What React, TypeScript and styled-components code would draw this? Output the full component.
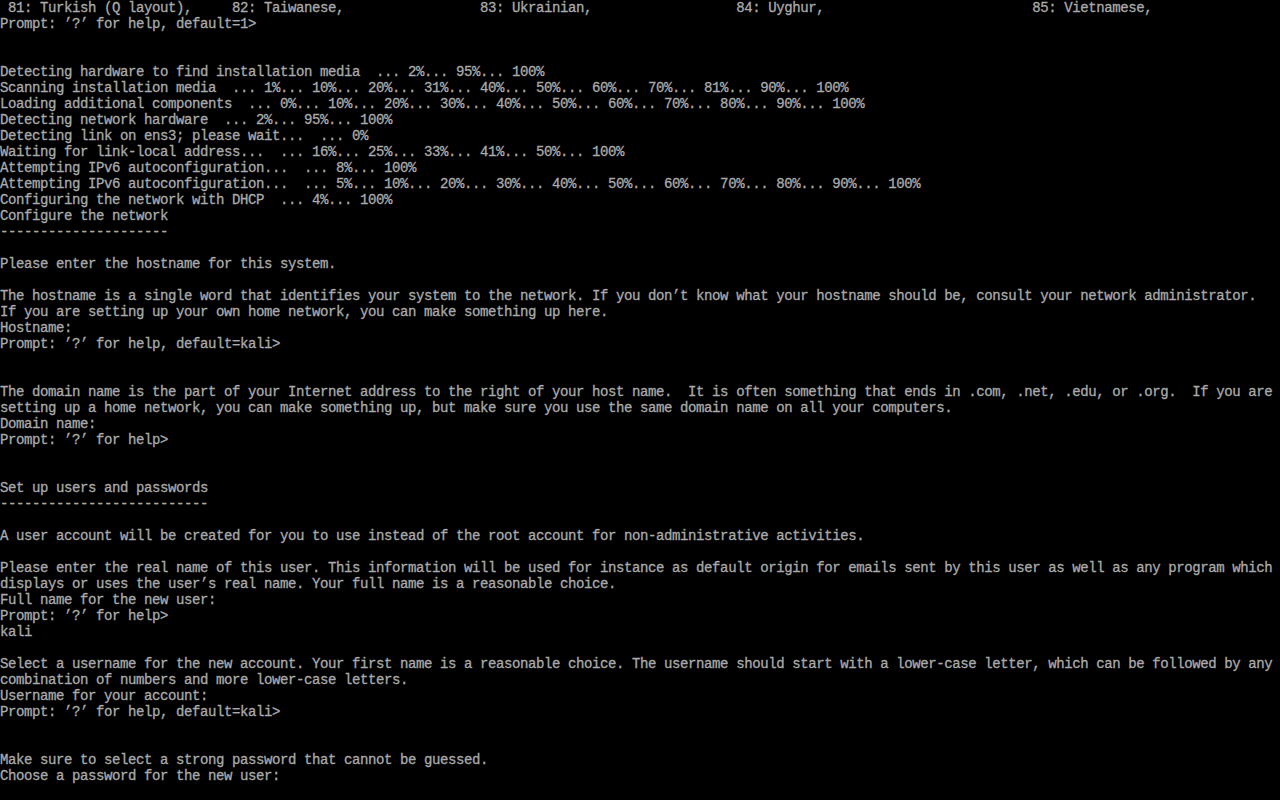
import styled, {createGlobalStyle} from "styled-components";

const GlobalStyle = createGlobalStyle`
  html, body {
    margin: 0;
    padding: 0;
    background: #000;
  }
`;

// place text segments at fixed console columns
function atCols(parts: [number, string][]) {
  let out = "";
  parts.forEach(([col, text]) => {
    out = out.padEnd(col, " ") + text;
  });
  return out;
}

const lines: string[] = [
  atCols([
    [0, " 81: Turkish (Q layout),"],
    [29, "82: Taiwanese,"],
    [60, "83: Ukrainian,"],
    [92, "84: Uyghur,"],
    [129, "85: Vietnamese,"],
  ]),
  "Prompt: ’?’ for help, default=1>",
  "",
  "",
  "Detecting hardware to find installation media  ... 2%... 95%... 100%",
  "Scanning installation media  ... 1%... 10%... 20%... 31%... 40%... 50%... 60%... 70%... 81%... 90%... 100%",
  "Loading additional components  ... 0%... 10%... 20%... 30%... 40%... 50%... 60%... 70%... 80%... 90%... 100%",
  "Detecting network hardware  ... 2%... 95%... 100%",
  "Detecting link on ens3; please wait...  ... 0%",
  "Waiting for link-local address...  ... 16%... 25%... 33%... 41%... 50%... 100%",
  "Attempting IPv6 autoconfiguration...  ... 8%... 100%",
  "Attempting IPv6 autoconfiguration...  ... 5%... 10%... 20%... 30%... 40%... 50%... 60%... 70%... 80%... 90%... 100%",
  "Configuring the network with DHCP  ... 4%... 100%",
  "Configure the network",
  "---------------------",
  "",
  "Please enter the hostname for this system.",
  "",
  "The hostname is a single word that identifies your system to the network. If you don’t know what your hostname should be, consult your network administrator.",
  "If you are setting up your own home network, you can make something up here.",
  "Hostname:",
  "Prompt: ’?’ for help, default=kali>",
  "",
  "",
  "The domain name is the part of your Internet address to the right of your host name.  It is often something that ends in .com, .net, .edu, or .org.  If you are",
  "setting up a home network, you can make something up, but make sure you use the same domain name on all your computers.",
  "Domain name:",
  "Prompt: ’?’ for help>",
  "",
  "",
  "Set up users and passwords",
  "--------------------------",
  "",
  "A user account will be created for you to use instead of the root account for non-administrative activities.",
  "",
  "Please enter the real name of this user. This information will be used for instance as default origin for emails sent by this user as well as any program which",
  "displays or uses the user’s real name. Your full name is a reasonable choice.",
  "Full name for the new user:",
  "Prompt: ’?’ for help>",
  "kali",
  "",
  "Select a username for the new account. Your first name is a reasonable choice. The username should start with a lower-case letter, which can be followed by any",
  "combination of numbers and more lower-case letters.",
  "Username for your account:",
  "Prompt: ’?’ for help, default=kali>",
  "",
  "",
  "Make sure to select a strong password that cannot be guessed.",
  "Choose a password for the new user:",
];

function App() {
  return (
    <>
      <GlobalStyle />
      <StyledConsole>
        {lines.map((text, i) => (
          <ConsoleLine key={i}>{text}</ConsoleLine>
        ))}
      </StyledConsole>
    </>
  );
}

export default App;

const StyledConsole = styled.div`
  width: 1280px;
  height: 800px;
  overflow: hidden;
  background: #000;
  color: #aaaaaa;
  font-family: "Liberation Mono", "DejaVu Sans Mono", monospace;
  font-size: 14px;
  letter-spacing: -0.4px;
  line-height: 16px;
  display: flex;
  flex-direction: column;
`;

const ConsoleLine = styled.div`
  height: 16px;
  white-space: pre;
  -webkit-text-stroke: 0.3px #aaaaaa;
`;
